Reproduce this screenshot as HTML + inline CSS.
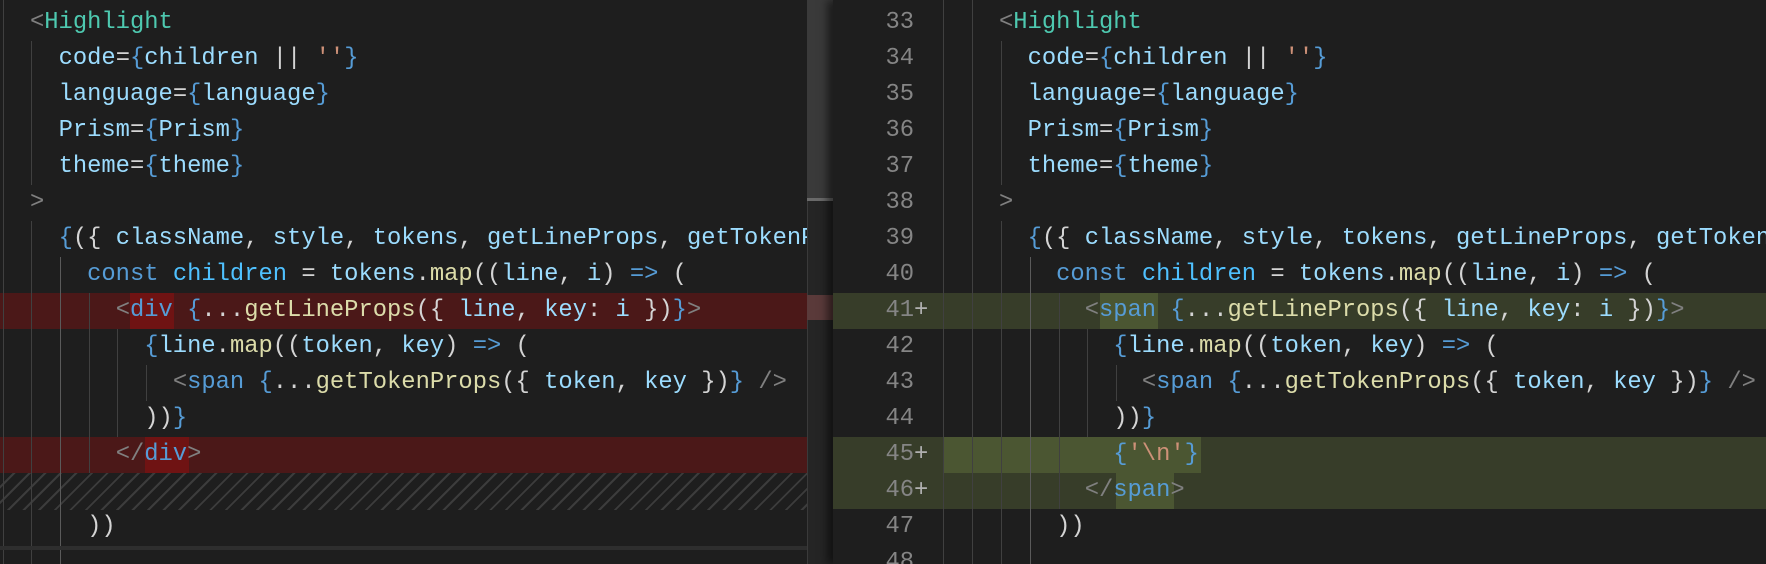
<!DOCTYPE html>
<html><head><meta charset="utf-8"><style>
html,body{margin:0;padding:0;background:#1e1e1e;width:1766px;height:564px;overflow:hidden}
.pane{position:absolute;top:0;height:564px;overflow:hidden;background:#1e1e1e}
.row{position:absolute;left:0;right:0;height:36px;line-height:36px;font-family:"Liberation Mono",monospace;font-size:23.8px;white-space:pre;color:#d4d4d4}
.g{position:absolute;width:1px;background:#404040}
.p{color:#808080}.t{color:#569cd6}.c{color:#4ec9b0}.a{color:#9cdcfe}.b{color:#569cd6}.v{color:#9cdcfe}.s{color:#ce9178}.f{color:#dcdcaa}.k{color:#569cd6}.n{color:#4fc1ff}
.ln{position:absolute;left:0;width:914px;text-align:right;color:#858585}
.del{background:#4b1818}.delw{background:#6f1313}
.ins{background:#373d29}.insw{background:#4b5632}
.hatch{background:repeating-linear-gradient(135deg,#1e1e1e 0 9px,#3c3c3c 9px 11px)}
</style></head><body>
<!-- LEFT PANE -->
<div class="pane" style="left:0;width:833px">
  <div class="del" style="position:absolute;left:0;width:807px;top:293px;height:36px"></div>
  <div class="delw" style="position:absolute;left:130px;width:44px;top:293px;height:36px"></div>
  <div class="del" style="position:absolute;left:0;width:807px;top:437px;height:36px"></div>
  <div class="delw" style="position:absolute;left:145px;width:44px;top:437px;height:36px"></div>
  <div class="hatch" style="position:absolute;left:0;width:807px;top:473px;height:37px"></div>
  <div class="g" style="left:3px;top:0;height:564px"></div>
  <div class="g" style="left:31px;top:41px;height:144px"></div>
  <div class="g" style="left:31px;top:221px;height:343px"></div>
  <div class="g" style="left:60px;top:257px;height:307px;background:#5a5a5a"></div>
  <div class="g" style="left:89px;top:293px;height:180px"></div>
  <div class="g" style="left:117px;top:329px;height:108px"></div>
  <div class="g" style="left:146px;top:365px;height:36px"></div>
  <div style="position:absolute;left:30px;top:0;width:777px;height:564px;overflow:hidden">
  <div class="row" style="top:5px"><span class="p">&lt;</span><span class="c">Highlight</span></div>
  <div class="row" style="top:41px">  <span class="a">code</span>=<span class="b">{</span><span class="v">children</span> || <span class="s">''</span><span class="b">}</span></div>
  <div class="row" style="top:77px">  <span class="a">language</span>=<span class="b">{</span><span class="v">language</span><span class="b">}</span></div>
  <div class="row" style="top:113px">  <span class="a">Prism</span>=<span class="b">{</span><span class="v">Prism</span><span class="b">}</span></div>
  <div class="row" style="top:149px">  <span class="a">theme</span>=<span class="b">{</span><span class="v">theme</span><span class="b">}</span></div>
  <div class="row" style="top:185px"><span class="p">&gt;</span></div>
  <div class="row" style="top:221px">  <span class="b">{</span>({ <span class="v">className</span>, <span class="v">style</span>, <span class="v">tokens</span>, <span class="v">getLineProps</span>, <span class="v">getTokenProps</span> }) <span class="k">=&gt;</span> {</div>
  <div class="row" style="top:257px">    <span class="k">const</span> <span class="n">children</span> = <span class="v">tokens</span>.<span class="f">map</span>((<span class="v">line</span>, <span class="v">i</span>) <span class="k">=&gt;</span> (</div>
  <div class="row" style="top:293px">      <span class="p">&lt;</span><span class="t">div</span> <span class="b">{</span>...<span class="f">getLineProps</span>({ <span class="v">line</span>, <span class="a">key</span>: <span class="v">i</span> })<span class="b">}</span><span class="p">&gt;</span></div>
  <div class="row" style="top:329px">        <span class="b">{</span><span class="v">line</span>.<span class="f">map</span>((<span class="v">token</span>, <span class="v">key</span>) <span class="k">=&gt;</span> (</div>
  <div class="row" style="top:365px">          <span class="p">&lt;</span><span class="t">span</span> <span class="b">{</span>...<span class="f">getTokenProps</span>({ <span class="v">token</span>, <span class="v">key</span> })<span class="b">}</span> <span class="p">/&gt;</span></div>
  <div class="row" style="top:401px">        ))<span class="b">}</span></div>
  <div class="row" style="top:437px">      <span class="p">&lt;/</span><span class="t">div</span><span class="p">&gt;</span></div>
  <div class="row" style="top:509px">    ))</div>
  </div>
  <div style="position:absolute;left:0;width:807px;top:546px;height:4px;background:#2e2e2e"></div>
  <div style="position:absolute;left:807px;width:26px;top:0;height:564px;background:#252525;border-left:1px solid #3a3a3a;box-sizing:border-box"></div>
  <div style="position:absolute;left:807px;width:26px;top:0;height:199px;background:#3a3a3a"></div>
  <div style="position:absolute;left:807px;width:26px;top:198px;height:3px;background:#6a6a6a"></div>
  <div style="position:absolute;left:807px;width:26px;top:295px;height:25px;background:#5a3a3a"></div>
</div>
<!-- RIGHT PANE -->
<div class="pane" style="left:833px;width:933px;box-shadow:-6px 0 8px rgba(0,0,0,.5)">
  <div class="ins" style="position:absolute;left:0;right:0;top:293px;height:36px"></div>
  <div class="insw" style="position:absolute;left:267px;width:58px;top:293px;height:36px"></div>
  <div class="ins" style="position:absolute;left:0;right:0;top:437px;height:72px"></div>
  <div class="insw" style="position:absolute;left:110px;width:258px;top:437px;height:36px"></div>
  <div class="insw" style="position:absolute;left:283px;width:58px;top:473px;height:36px"></div>
  <div class="g" style="left:110px;top:0;height:564px"></div>
  <div class="g" style="left:139px;top:0;height:564px"></div>
  <div class="g" style="left:168px;top:41px;height:144px"></div>
  <div class="g" style="left:168px;top:221px;height:343px"></div>
  <div class="g" style="left:197px;top:257px;height:307px;background:#5a5a5a"></div>
  <div class="g" style="left:226px;top:293px;height:216px"></div>
  <div class="g" style="left:254px;top:329px;height:108px"></div>
  <div class="g" style="left:283px;top:365px;height:36px"></div>
  <div style="position:absolute;left:-833px;top:0;width:1766px;height:564px">
  <div class="row ln" style="top:5px">33</div><div class="row ln" style="top:41px">34</div><div class="row ln" style="top:77px">35</div><div class="row ln" style="top:113px">36</div><div class="row ln" style="top:149px">37</div><div class="row ln" style="top:185px">38</div><div class="row ln" style="top:221px">39</div><div class="row ln" style="top:257px">40</div><div class="row ln" style="top:293px">41</div><div class="row ln" style="top:329px">42</div><div class="row ln" style="top:365px">43</div><div class="row ln" style="top:401px">44</div><div class="row ln" style="top:437px">45</div><div class="row ln" style="top:473px">46</div><div class="row ln" style="top:509px">47</div><div class="row ln" style="top:545px">48</div>
  <div class="row" style="top:293px;left:914px;color:#b0b0b0">+</div>
  <div class="row" style="top:437px;left:914px;color:#b0b0b0">+</div>
  <div class="row" style="top:473px;left:914px;color:#b0b0b0">+</div>
  <div style="position:absolute;left:999px;top:0;width:767px;height:564px">
  <div class="row" style="top:5px"><span class="p">&lt;</span><span class="c">Highlight</span></div>
  <div class="row" style="top:41px">  <span class="a">code</span>=<span class="b">{</span><span class="v">children</span> || <span class="s">''</span><span class="b">}</span></div>
  <div class="row" style="top:77px">  <span class="a">language</span>=<span class="b">{</span><span class="v">language</span><span class="b">}</span></div>
  <div class="row" style="top:113px">  <span class="a">Prism</span>=<span class="b">{</span><span class="v">Prism</span><span class="b">}</span></div>
  <div class="row" style="top:149px">  <span class="a">theme</span>=<span class="b">{</span><span class="v">theme</span><span class="b">}</span></div>
  <div class="row" style="top:185px"><span class="p">&gt;</span></div>
  <div class="row" style="top:221px">  <span class="b">{</span>({ <span class="v">className</span>, <span class="v">style</span>, <span class="v">tokens</span>, <span class="v">getLineProps</span>, <span class="v">getTokenProps</span> }) <span class="k">=&gt;</span> {</div>
  <div class="row" style="top:257px">    <span class="k">const</span> <span class="n">children</span> = <span class="v">tokens</span>.<span class="f">map</span>((<span class="v">line</span>, <span class="v">i</span>) <span class="k">=&gt;</span> (</div>
  <div class="row" style="top:293px">      <span class="p">&lt;</span><span class="t">span</span> <span class="b">{</span>...<span class="f">getLineProps</span>({ <span class="v">line</span>, <span class="a">key</span>: <span class="v">i</span> })<span class="b">}</span><span class="p">&gt;</span></div>
  <div class="row" style="top:329px">        <span class="b">{</span><span class="v">line</span>.<span class="f">map</span>((<span class="v">token</span>, <span class="v">key</span>) <span class="k">=&gt;</span> (</div>
  <div class="row" style="top:365px">          <span class="p">&lt;</span><span class="t">span</span> <span class="b">{</span>...<span class="f">getTokenProps</span>({ <span class="v">token</span>, <span class="v">key</span> })<span class="b">}</span> <span class="p">/&gt;</span></div>
  <div class="row" style="top:401px">        ))<span class="b">}</span></div>
  <div class="row" style="top:437px">        <span class="b">{</span><span class="s">'\n'</span><span class="b">}</span></div>
  <div class="row" style="top:473px">      <span class="p">&lt;/</span><span class="t">span</span><span class="p">&gt;</span></div>
  <div class="row" style="top:509px">    ))</div>
  </div>
  </div>
</div>
</body></html>
